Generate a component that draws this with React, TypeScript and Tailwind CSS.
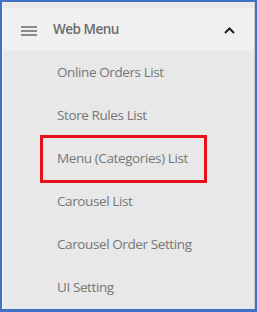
import React from 'react';

const items = [
  'Online Orders List',
  'Store Rules List',
  'Menu (Categories) List',
  'Carousel List',
  'Carousel Order Setting',
  'UI Setting',
];

const App: React.FC = () => {
  return (
    <div className="w-[257px] h-[312px] border-2 border-b-[3px] border-[#3f71c6] bg-[#e8e8e8] font-['Open_Sans',sans-serif]">
      <div className="h-full border-l border-l-[#f6f6f6] border-r border-r-[#cfcfcf]">
        <div className="h-[6px] bg-[#e9e9e9]" />
        <div className="h-[43px] bg-[#f0f0f0] flex items-center">
          <svg width="16" height="10" viewBox="0 0 16 10" className="ml-[18px] mt-[2px]">
            <path d="M0 1h16M0 5h16M0 9h16" stroke="#6a6a6a" strokeWidth="1.5" />
          </svg>
          <span className="ml-[16px] text-[13.5px] font-semibold text-[#6b6b6b] tracking-[-0.5px]">Web Menu</span>
          <svg width="11" height="7" viewBox="0 0 11 7" className="ml-auto mr-[19px] mt-[1px]">
            <path d="M1 6l4.5-4.5L10 6" fill="none" stroke="#222" strokeWidth="2" />
          </svg>
        </div>
        {items.map((label) => (
          <div key={label} className="relative h-[43px] flex items-center pl-[54px]">
            <span className="text-[13.5px] text-[#777] tracking-[-0.4px]">{label}</span>
            {label === 'Menu (Categories) List' && (
              <div className="absolute left-[37px] top-[-2px] w-[167px] h-[48px] border-[3px] border-[#e8101c]" />
            )}
          </div>
        ))}
      </div>
    </div>
  );
};

export default App;
